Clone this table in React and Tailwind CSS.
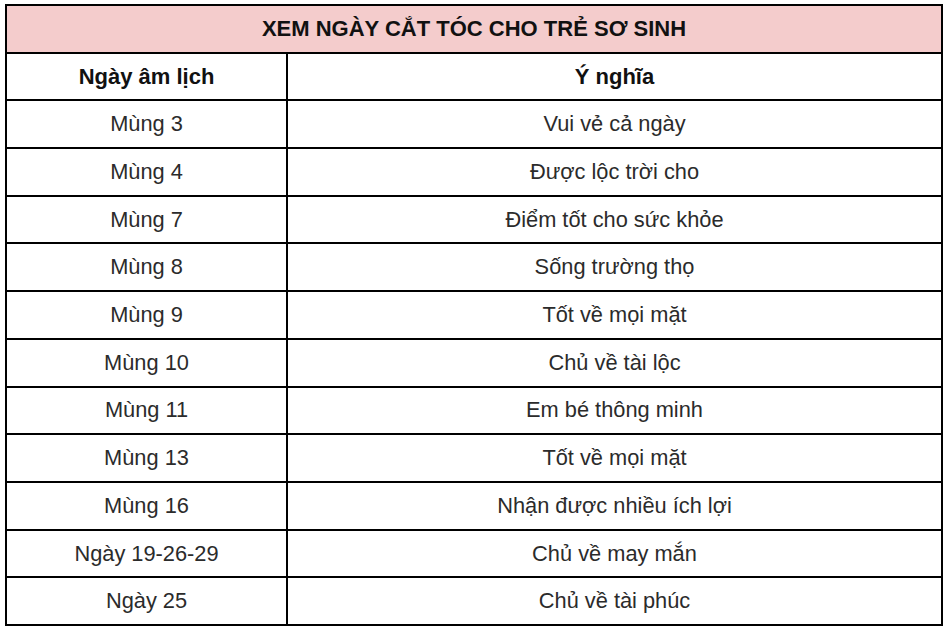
import React from 'react';

const rows = [
    ['Mùng 3', 'Vui vẻ cả ngày'],
    ['Mùng 4', 'Được lộc trời cho'],
    ['Mùng 7', 'Điểm tốt cho sức khỏe'],
    ['Mùng 8', 'Sống trường thọ'],
    ['Mùng 9', 'Tốt về mọi mặt'],
    ['Mùng 10', 'Chủ về tài lộc'],
    ['Mùng 11', 'Em bé thông minh'],
    ['Mùng 13', 'Tốt về mọi mặt'],
    ['Mùng 16', 'Nhận được nhiều ích lợi'],
    ['Ngày 19-26-29', 'Chủ về may mắn'],
    ['Ngày 25', 'Chủ về tài phúc'],
];

export default function App() {
    return (
        <div className="w-[949px] h-[631px] bg-white pt-[4px] pl-[5px] font-['Liberation_Sans',Arial,sans-serif]">
            <table className="w-[938px] border-collapse border-2 border-black text-center table-fixed">
                <colgroup>
                    <col className="w-[281px]" />
                    <col />
                </colgroup>
                <thead>
                    <tr className="h-[47.7px]">
                        <th colSpan={2} className="border-2 border-black bg-[#f4cccc] text-[22px] leading-none font-bold text-[#111]">
                            XEM NGÀY CẮT TÓC CHO TRẺ SƠ SINH
                        </th>
                    </tr>
                    <tr className="h-[47.7px]">
                        <th className="border-2 border-black text-[22px] leading-none font-bold text-[#111]">Ngày âm lịch</th>
                        <th className="border-2 border-black text-[22px] leading-none font-bold text-[#111]">Ý nghĩa</th>
                    </tr>
                </thead>
                <tbody>
                    {rows.map(([day, meaning]) => (
                        <tr key={day} className="h-[47.7px]">
                            <td className="border-2 border-black text-[21.8px] leading-none text-[#2b2b2b]">{day}</td>
                            <td className="border-2 border-black text-[21.8px] leading-none text-[#2b2b2b]">{meaning}</td>
                        </tr>
                    ))}
                </tbody>
            </table>
        </div>
    );
}
